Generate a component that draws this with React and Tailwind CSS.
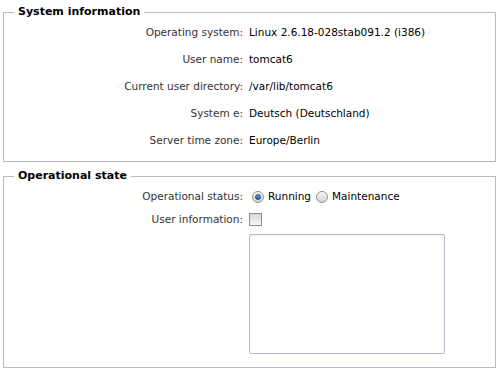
import React from 'react';

const rows = [
  ['Operating system:', 'Linux 2.6.18-028stab091.2 (i386)'],
  ['User name:', 'tomcat6'],
  ['Current user directory:', '/var/lib/tomcat6'],
  ['System e:', 'Deutsch (Deutschland)'],
  ['Server time zone:', 'Europe/Berlin'],
];

function Radio({ checked }) {
  return (
    <span className="inline-flex h-[12px] w-[12px] items-center justify-center rounded-full border border-[#8f8f8f] bg-gradient-to-b from-[#f4f4f4] to-[#d6d6d6] shadow-[inset_0_1px_1px_rgba(255,255,255,0.8)]">
      {checked && (
        <span className="h-[6px] w-[6px] rounded-full border border-[#1d4f8a] bg-gradient-to-b from-[#6fa6e0] to-[#1b5aa8]" />
      )}
    </span>
  );
}

export default function App() {
  return (
    <div
      className="min-h-screen bg-white px-[3px] pt-[5px] text-[10.5px] text-[#222]"
      style={{ fontFamily: '"DejaVu Sans", Verdana, sans-serif' }}
    >
      {/* System information */}
      <fieldset className="w-[493px] border border-[#b9b9c9] pb-[7px]">
        <legend className="ml-[10px] px-[4px] text-[11px] font-bold leading-[14px] text-black">
          System information
        </legend>
        <div className="grid grid-cols-[245px_1fr]">
          {rows.map(([label, value]) => (
            <React.Fragment key={label}>
              <div className="pr-[6px] text-right leading-[27px] text-[#333]">{label}</div>
              <div className="leading-[27px] text-black">{value}</div>
            </React.Fragment>
          ))}
        </div>
      </fieldset>

      {/* Operational state */}
      <fieldset className="mt-[7px] w-[493px] border border-[#b9b9c9] pb-[13px]">
        <legend className="ml-[10px] px-[4px] text-[11px] font-bold leading-[14px] text-black">
          Operational state
        </legend>
        <div className="grid grid-cols-[245px_1fr] pt-[2px]">
          <div className="pr-[6px] text-right leading-[23px] text-[#333]">Operational status:</div>
          <div className="flex items-center leading-[23px] text-black">
            <span className="ml-[3px] mr-[4px] flex"><Radio checked /></span>
            <span className="mr-[5px]">Running</span>
            <span className="mr-[4px] flex"><Radio /></span>
            <span>Maintenance</span>
          </div>
          <div className="pr-[6px] text-right leading-[23px] text-[#333]">User information:</div>
          <div className="flex items-center">
            <span className="h-[13px] w-[13px] border border-[#8f8f8f] bg-gradient-to-b from-[#d8d8d8] to-[#f6f6f6]" />
          </div>
          <div />
          <div className="pt-[3px]">
            <div className="h-[120px] w-[196px] rounded-[2px] border border-[#b9b9c9] bg-white shadow-[inset_0_1px_2px_rgba(0,0,0,0.08)]" />
          </div>
        </div>
      </fieldset>
    </div>
  );
}
